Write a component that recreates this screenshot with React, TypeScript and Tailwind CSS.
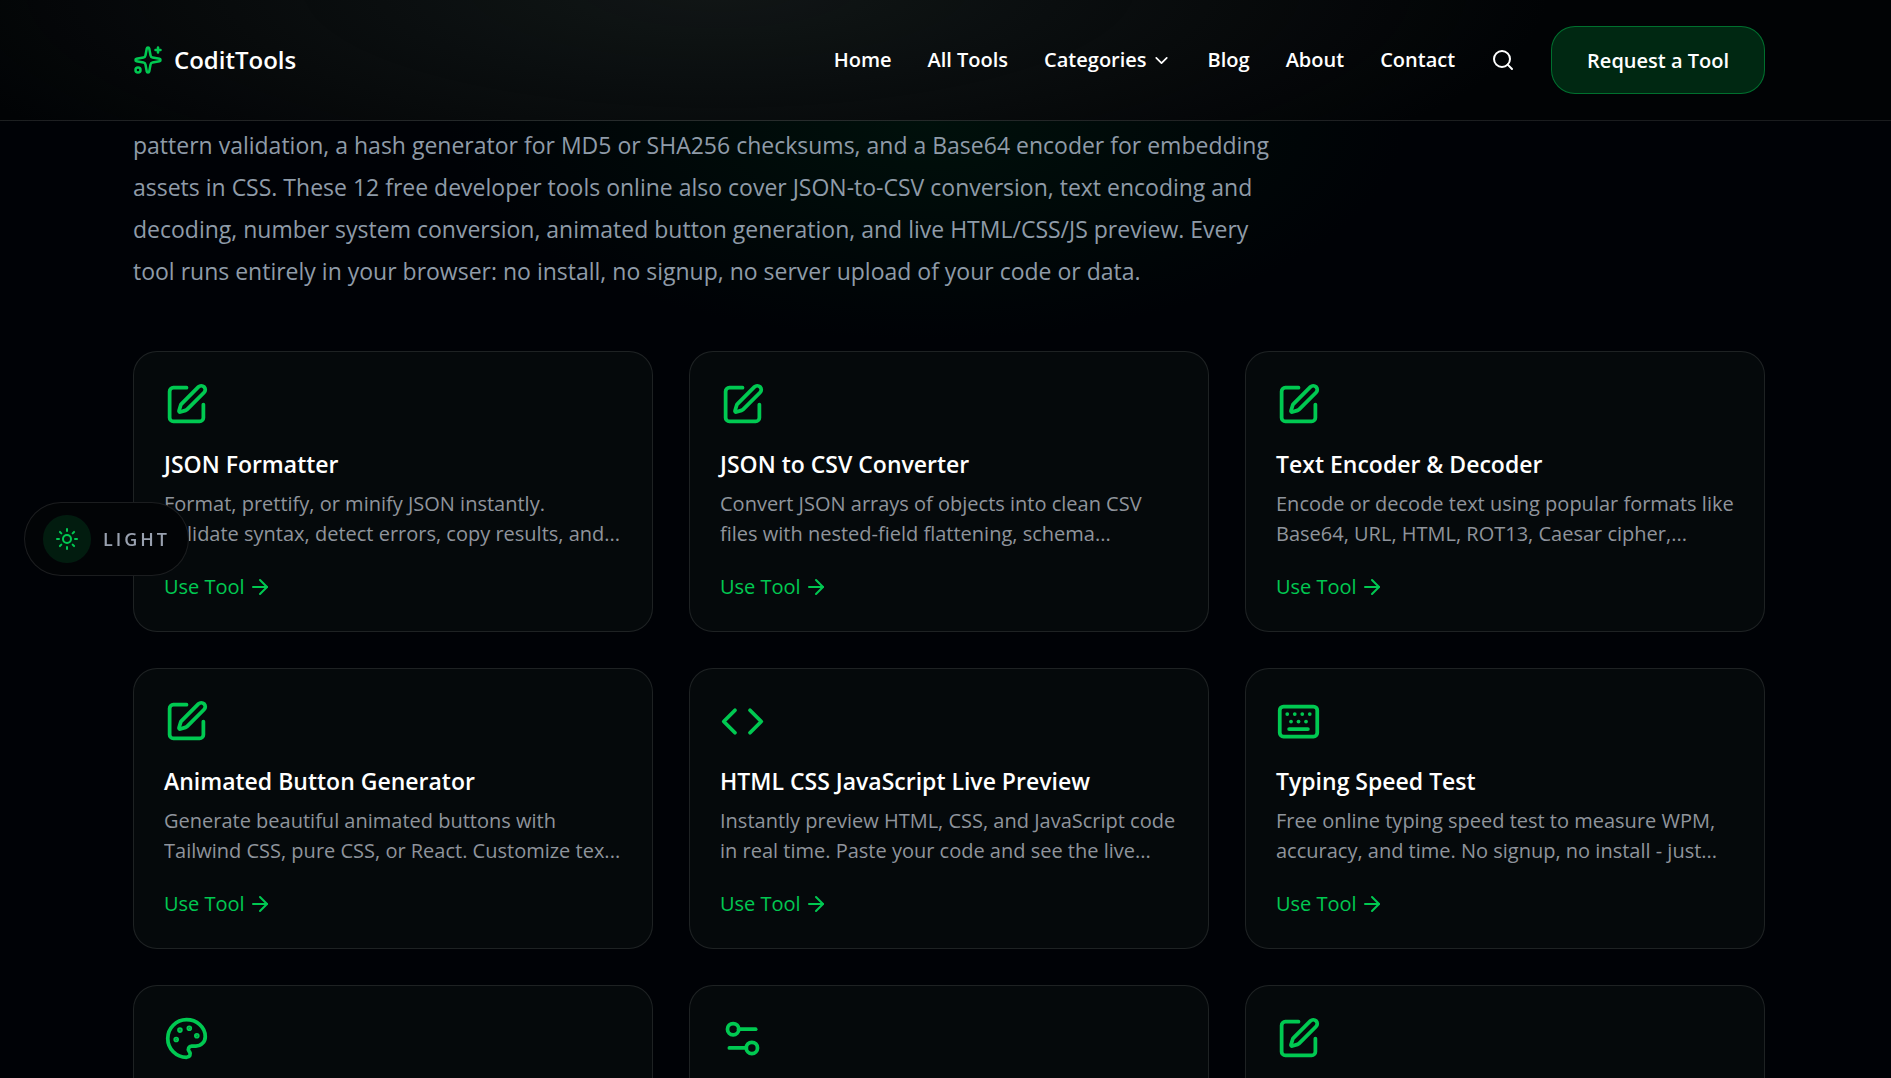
import {
  ArrowRight,
  ChevronDown,
  Code,
  Keyboard,
  Palette,
  Search,
  Settings2,
  Sparkles,
  SquarePen,
  Sun,
  type LucideIcon,
} from "lucide-react";

type Tool = {
  title: string;
  description: string;
  icon: LucideIcon;
};

const tools: Tool[] = [
  {
    title: "JSON Formatter",
    description: "Format, prettify, or minify JSON instantly. Validate syntax, detect errors, copy results, and...",
    icon: SquarePen,
  },
  {
    title: "JSON to CSV Converter",
    description: "Convert JSON arrays of objects into clean CSV files with nested-field flattening, schema...",
    icon: SquarePen,
  },
  {
    title: "Text Encoder & Decoder",
    description: "Encode or decode text using popular formats like Base64, URL, HTML, ROT13, Caesar cipher,...",
    icon: SquarePen,
  },
  {
    title: "Animated Button Generator",
    description: "Generate beautiful animated buttons with Tailwind CSS, pure CSS, or React. Customize tex...",
    icon: SquarePen,
  },
  {
    title: "HTML CSS JavaScript Live Preview",
    description: "Instantly preview HTML, CSS, and JavaScript code in real time. Paste your code and see the live...",
    icon: Code,
  },
  {
    title: "Typing Speed Test",
    description: "Free online typing speed test to measure WPM, accuracy, and time. No signup, no install - just...",
    icon: Keyboard,
  },
];

// cards below the fold show only their icon
const moreTools: { label: string; icon: LucideIcon }[] = [
  { label: "Color tool", icon: Palette },
  { label: "Settings tool", icon: Settings2 },
  { label: "Text tool", icon: SquarePen },
];

function Header() {
  const link = "transition-colors hover:text-green-500";
  return (
    <header className="sticky top-0 z-20 border-b border-white/10 bg-[#010305] bg-[radial-gradient(ellipse_44%_200%_at_38%_-10%,#111616,transparent)] pl-[7px]">
      <div className="mx-auto flex h-[120px] max-w-[1632px] items-center justify-between">
        <a href="#home" className="flex items-center gap-[11px] text-2xl font-semibold text-white">
          <Sparkles className="size-[30px] text-green-500" />
          CoditTools
        </a>
        <nav className="flex items-center gap-9 text-xl font-semibold text-white">
          <a href="#home" className={link}>Home</a>
          <a href="#tools" className={link}>All Tools</a>
          <button type="button" className="flex items-center gap-1 transition-colors hover:text-green-500">
            Categories
            <ChevronDown className="size-[21px]" />
          </button>
          <a href="#blog" className={link}>Blog</a>
          <a href="#about" className={link}>About</a>
          <a href="#contact" className={link}>Contact</a>
          <button type="button" aria-label="Search" className={link}>
            <Search className="size-6" />
          </button>
          <a
            href="#request"
            className="rounded-3xl border border-green-500/45 bg-[#002812] px-[35px] pt-5 pb-[18px] hover:bg-green-500/30"
          >
            Request a Tool
          </a>
        </nav>
      </div>
    </header>
  );
}

function ToolCard({ title, description, icon: Icon }: Tool) {
  return (
    <article className="rounded-3xl border border-white/10 bg-[#05090b] p-[30px]">
      <Icon className="size-[45px] text-green-500" />
      <h3 className="mt-[19px] text-[23px] leading-9 font-semibold text-white">{title}</h3>
      <p className="mt-[7px] line-clamp-2 text-xl leading-[30px] text-[#8f949c]">{description}</p>
      <a href="#tool" className="mt-6 flex items-center gap-[3px] text-xl leading-7 text-green-500">
        Use Tool
        <ArrowRight className="size-6" />
      </a>
    </article>
  );
}

function ThemeToggle() {
  return (
    <button
      type="button"
      className="fixed top-1/2 left-6 z-10 flex -translate-y-1/2 items-center gap-3 rounded-full border border-white/10 bg-[#020406] py-3 pr-[18px] pl-[18px] text-lg font-semibold tracking-[3px] text-[#99a1af]"
    >
      <span className="flex size-12 items-center justify-center rounded-full bg-green-500/12 text-green-500">
        <Sun className="size-6" />
      </span>
      LIGHT
    </button>
  );
}

export default function App() {
  return (
    <div className="h-screen overflow-hidden bg-[#000206] bg-[radial-gradient(ellipse_480px_220px_at_49%_120px,#00100b,transparent)] font-['Open_Sans',sans-serif]">
      <Header />
      <div className="pl-[7px]">
        <main className="mx-auto max-w-[1632px] pt-[3px]">
          <p className="max-w-[1152px] text-[23px] leading-[42px] text-[#8f9ba8]">
            pattern validation, a hash generator for MD5 or SHA256 checksums, and a Base64 encoder for embedding assets
            in CSS. These 12 free developer tools online also cover JSON-to-CSV conversion, text encoding and decoding,
            number system conversion, animated button generation, and live HTML/CSS/JS preview. Every tool runs entirely
            in your browser: no install, no signup, no server upload of your code or data.
          </p>
          <div className="mt-[59px] grid grid-cols-3 gap-9">
            {tools.map((tool) => (
              <ToolCard key={tool.title} {...tool} />
            ))}
            {moreTools.map(({ label, icon: Icon }) => (
              <article
                key={label}
                aria-label={label}
                className="h-[281px] rounded-3xl border border-white/10 bg-[#05090b] p-[30px]"
              >
                <Icon className="size-[45px] text-green-500" />
              </article>
            ))}
          </div>
        </main>
      </div>
      <ThemeToggle />
    </div>
  );
}
